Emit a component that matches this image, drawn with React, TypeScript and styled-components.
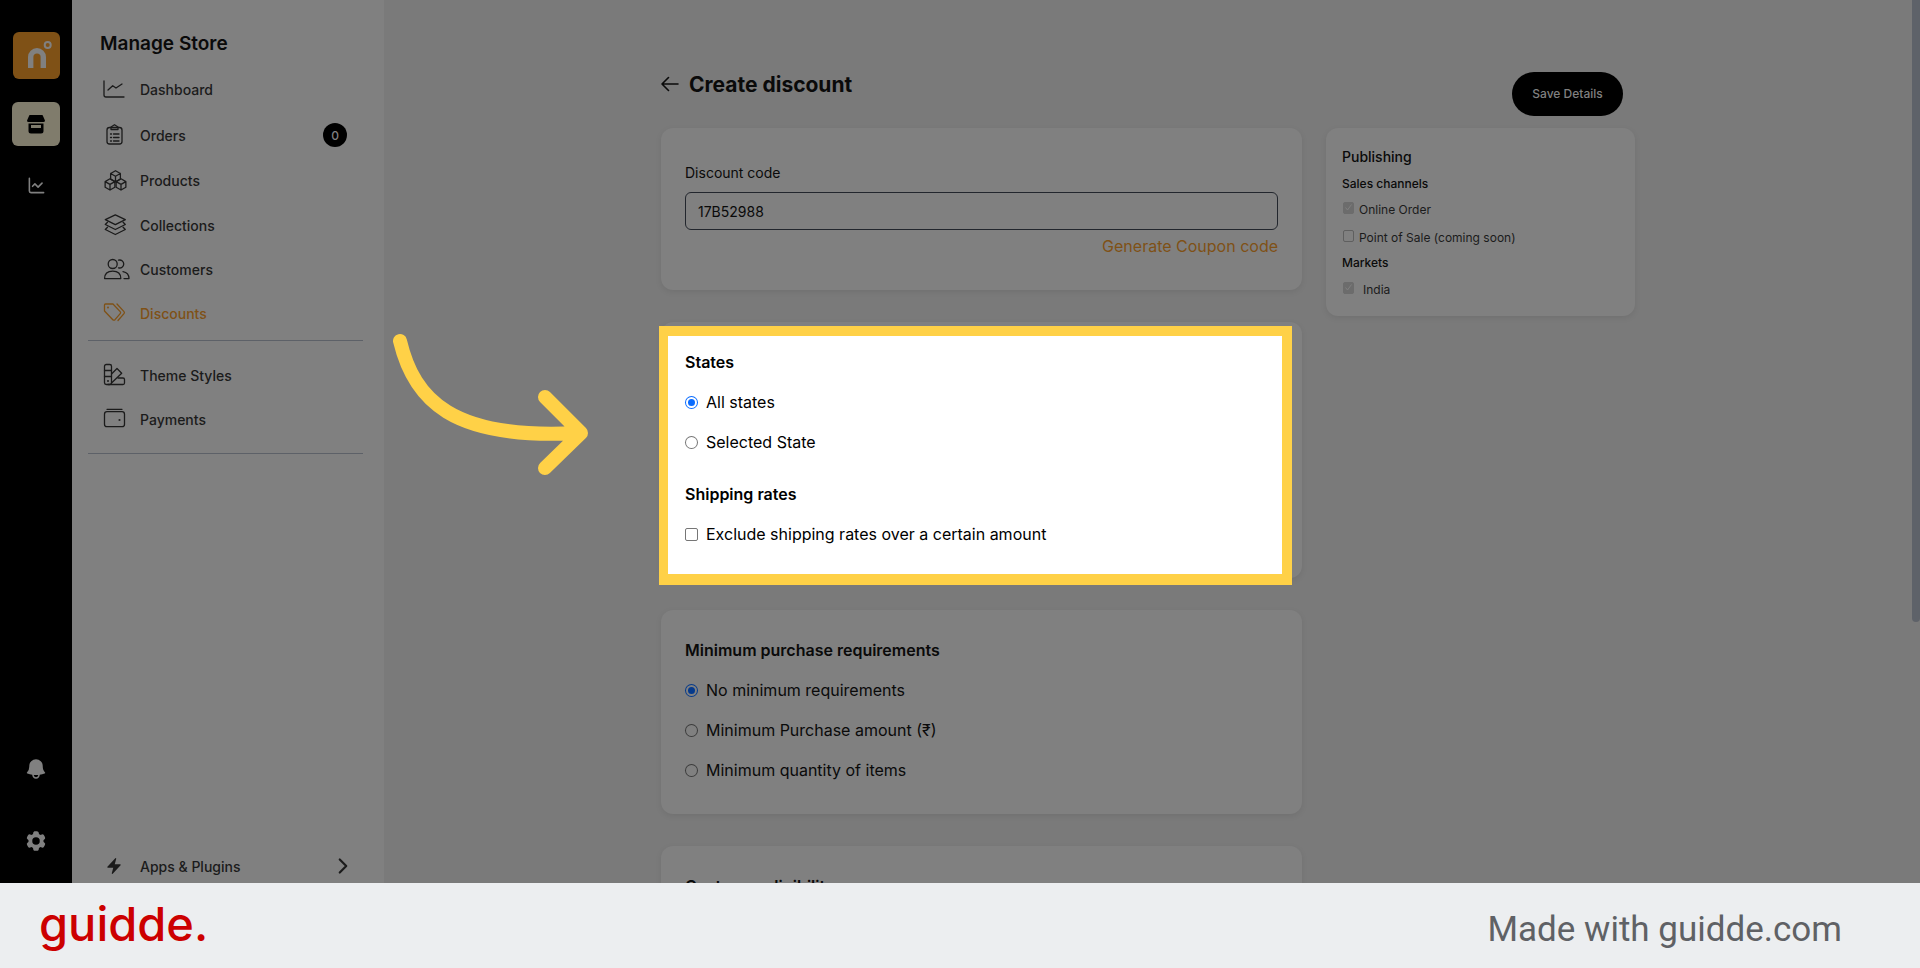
import styled, { createGlobalStyle } from 'styled-components';
import { HiBell, HiCog6Tooth, HiBolt } from 'react-icons/hi2';
import { ChevronRight, ChartLine } from 'lucide-react';

const GlobalStyle = createGlobalStyle`
    html, body {
        margin: 0;
        padding: 0;
        height: 100%;
        overflow: hidden;
        font-family: Inter, "Liberation Sans", sans-serif;
        color: #0a0a0a;
    }
    * { box-sizing: border-box; }
`;

const Screen = styled.div`
    position: relative;
    width: 1920px;
    height: 968px;
    display: flex;
    flex-direction: column;
    overflow: hidden;
`;

const Shell = styled.div`
    flex: 1;
    min-height: 0;
    display: flex;
    overflow: hidden;
    background: #7a7a7a;
`;

const Rail = styled.nav`
    width: 72px;
    background: #000;
    display: flex;
    flex-direction: column;
    align-items: center;
    padding: 32px 0 30px;
    color: #808080;
`;

const LogoTile = styled.div`
    width: 47px;
    height: 47px;
    border-radius: 6px;
    background: #7f5116;
    display: flex;
`;

const StoreTile = styled.div`
    width: 48px;
    height: 44px;
    margin-top: 23px;
    border-radius: 6px;
    background: #807c6c;
    display: flex;
    align-items: center;
    justify-content: center;
`;

const RailIcon = styled.div<{ $top?: number; $auto?: boolean }>`
    display: flex;
    margin-top: ${(p) => (p.$auto ? 'auto' : `${p.$top ?? 0}px`)};
`;

const Sidebar = styled.aside`
    width: 312px;
    background: #808080;
    padding: 32px 21px 0 16px;
    display: flex;
    flex-direction: column;
`;

const SideTitle = styled.h2`
    margin: 0 0 10px 12px;
    font-size: 19px;
    line-height: 24px;
    font-weight: 600;
`;

const SideItem = styled.div<{ $active?: boolean; $height?: number }>`
    height: ${(p) => p.$height ?? 44}px;
    padding-left: 12px;
    display: flex;
    align-items: center;
    font-size: 14px;
    font-weight: 500;
    color: ${(p) => (p.$active ? '#7f5116' : '#1b1b1b')};
`;

const SideIcon = styled.span<{ $inset?: number }>`
    width: 40px;
    padding-left: ${(p) => p.$inset ?? 0}px;
    display: flex;
    align-items: center;
`;

const SideLabel = styled.span`
    flex: 1;
`;

const CountBadge = styled.span`
    width: 24px;
    height: 24px;
    margin-right: 16px;
    border-radius: 50%;
    background: #000;
    color: #808080;
    font-size: 12px;
    display: flex;
    align-items: center;
    justify-content: center;
`;

const Divider = styled.hr<{ $top: number }>`
    width: 275px;
    margin: ${(p) => p.$top}px 0 12px 0;
    border: 0;
    border-top: 1px solid #5d6168;
`;

const SideSpacer = styled.div`
    flex: 1;
`;

const Main = styled.main`
    flex: 1;
    min-width: 0;
    padding: 72px 0 0 277px;
    display: flex;
    flex-direction: column;
    position: relative;
`;

const HeadRow = styled.div`
    width: 962px;
    height: 44px;
    margin-bottom: 12px;
    display: flex;
    justify-content: space-between;
`;

const PageTitle = styled.h1`
    margin: 0;
    height: 24px;
    display: flex;
    align-items: center;
    gap: 10px;
    font-size: 21px;
    font-weight: 700;
`;

const SaveButton = styled.button`
    width: 111px;
    height: 44px;
    padding: 0 0 2px;
    border: 0;
    border-radius: 22px;
    background: #000;
    color: #808080;
    font: 500 12px Inter, sans-serif;
`;

const Columns = styled.div`
    display: flex;
    align-items: flex-start;
    gap: 24px;
`;

const Stack = styled.div`
    width: 641px;
    display: flex;
    flex-direction: column;
    gap: 32px;
    flex-shrink: 0;
`;

const Card = styled.section<{ $height?: number }>`
    height: ${(p) => (p.$height ? `${p.$height}px` : 'auto')};
    padding: 24px;
    border-radius: 12px;
    background: #808080;
    box-shadow: 0 2px 6px rgba(0, 0, 0, 0.08);
    flex-shrink: 0;
`;

const PublishCard = styled(Card)`
    width: 309px;
    padding: 20px 16px;
`;

const FieldLabel = styled.div`
    font-size: 14px;
    line-height: 18px;
    margin: 12px 0 10px;
`;

const CodeInput = styled.div`
    height: 38px;
    padding-left: 12px;
    border: 1px solid #22262d;
    border-radius: 6px;
    display: flex;
    align-items: center;
    font-size: 14px;
`;

const GenerateLink = styled.div`
    margin-top: 5px;
    text-align: right;
    font-size: 16px;
    line-height: 22px;
    color: #7f5116;
`;

const GroupTitle = styled.h3<{ $top?: number }>`
    margin: ${(p) => p.$top ?? 0}px 0 0;
    font-size: 16px;
    line-height: 24px;
    font-weight: 600;
`;

const OptionRow = styled.label`
    margin-top: 16px;
    height: 24px;
    display: flex;
    align-items: center;
    gap: 8px;
    font-size: 16px;
`;

const Radio = styled.span<{ $on?: boolean; $lit?: boolean }>`
    width: 11px;
    height: 11px;
    margin: 1px;
    flex-shrink: 0;
    border-radius: 50%;
    background: ${(p) => (p.$on ? (p.$lit ? '#0a6cff' : '#053a8c') : 'transparent')};
    box-shadow: ${(p) =>
        p.$on
            ? `inset 0 0 0 2px ${p.$lit ? '#fff' : '#808080'}, 0 0 0 1px ${p.$lit ? '#0a6cff' : '#053a8c'}`
            : `0 0 0 1px ${p.$lit ? '#767676' : '#3b3b3b'}`};
`;

const BoxTick = styled.span`
    width: 13px;
    height: 13px;
    flex-shrink: 0;
    border: 1px solid #767676;
    border-radius: 2px;
`;

const PublishTitle = styled.div`
    font-size: 14px;
    line-height: 18px;
    font-weight: 500;
`;

const PublishHeading = styled.div`
    margin-top: 10px;
    font-size: 12px;
    line-height: 16px;
    font-weight: 500;
`;

const PublishRow = styled.div<{ $gap?: number; $top?: number }>`
    height: 16px;
    margin-top: ${(p) => p.$top ?? 10}px;
    display: flex;
    align-items: center;
    gap: ${(p) => p.$gap ?? 5}px;
    font-size: 12px;
    color: #1b1b1b;
`;

const MutedBox = styled.span<{ $checked?: boolean }>`
    width: 11px;
    height: 12px;
    margin: -3px 0 0 1px;
    border-radius: 2px;
    background: ${(p) => (p.$checked ? '#6c6c6c' : 'transparent')};
    border: 1px solid ${(p) => (p.$checked ? '#6c6c6c' : '#5f5f5f')};
    display: flex;
    align-items: center;
    justify-content: center;
`;

const ScrollThumb = styled.div`
    position: absolute;
    top: 0;
    right: 0;
    width: 8px;
    height: 622px;
    border-radius: 0 0 4px 4px;
    background: #5e6269;
`;

// highlighted step on top of the dimmed page
const Highlight = styled.div`
    position: absolute;
    left: 659px;
    top: 326px;
    width: 633px;
    height: 259px;
    padding: 10px 16px 0 17px;
    background: #fff;
    border-style: solid;
    border-color: #ffd147;
    border-width: 10px 10px 11px 9px;
    color: #000;
`;

const Pointer = styled.svg`
    position: absolute;
    left: 380px;
    top: 320px;
`;

const Footer = styled.footer`
    height: 85px;
    padding: 0 78px 0 39px;
    background: #eceef0;
    display: flex;
    align-items: center;
    justify-content: space-between;
`;

const Wordmark = styled.div`
    font-family: Inter, sans-serif;
    font-size: 47px;
    font-weight: 500;
    line-height: 1;
    margin-top: -4px;
    color: #cc0000;
`;

const MadeWith = styled.div`
    font-family: Roboto, sans-serif;
    font-size: 35px;
    margin-top: 7px;
    color: #5f6165;
`;

const Glyph = styled.svg`
    fill: none;
    stroke: currentColor;
    stroke-width: 1.3;
    stroke-linecap: round;
    stroke-linejoin: round;
`;

const DashboardIcon = () => (
    <Glyph width="30" height="24" viewBox="0 0 30 24">
        <path d="M4 4v14a2 2 0 0 0 2 2h18" />
        <path d="M8 13l4.7-4.3 3.3 2.3 6-4" />
    </Glyph>
);

const OrdersIcon = () => (
    <Glyph width="30" height="24" viewBox="0 0 30 24">
        <rect x="7" y="4.5" width="15" height="16.5" rx="2.5" />
        <path d="M11 6.5V4l3.5-2.3L18 4v2.5z" />
        <path d="M10.5 11h1M13.5 11H19M10.5 14.5h1M13.5 14.5H19M10.5 18h1M13.5 18H19" />
    </Glyph>
);

const cube = (x: number, y: number, r: number) => {
    const dx = r * 0.87;
    const dy = r / 2;
    return `M${x} ${y - r}L${x + dx} ${y - dy}V${y + dy}L${x} ${y + r}L${x - dx} ${y + dy}V${y - dy}Z M${x - dx} ${y - dy}L${x} ${y}L${x + dx} ${y - dy}M${x} ${y}V${y + r}`;
};

const ProductsIcon = () => (
    <Glyph width="30" height="24" viewBox="0 0 30 24">
        <path d={cube(15.5, 7.3, 5.6)} />
        <path d={cube(10, 15.4, 5.6)} />
        <path d={cube(21, 15.4, 5.6)} />
    </Glyph>
);

const CollectionsIcon = () => (
    <Glyph width="30" height="24" viewBox="0 0 30 24">
        <path d="M15.3 1.8l10 4.8-10 5-10-5z" />
        <path d="M7.5 9.2l-2.2 2.3 10 5 10-5-2.2-2.3" />
        <path d="M7.5 14.2l-2.2 2.3 10 5 10-5-2.2-2.3" />
    </Glyph>
);

const CustomersIcon = () => (
    <Glyph width="30" height="24" viewBox="0 0 30 24">
        <circle cx="12.7" cy="7" r="4.5" />
        <path d="M18.5 3.2a4 4 0 1 1 0 7.6" />
        <path d="M4.6 21.6c0-5 3.4-7.4 8.1-7.4s8.1 2.4 8.1 7.4z" />
        <path d="M23 14.6c3.6.6 6 3.2 6 7h-5" />
    </Glyph>
);

const DiscountsIcon = () => (
    <Glyph width="30" height="24" viewBox="0 0 30 24">
        <path d="M5.5 3H13l7.2 7.6a1.5 1.5 0 0 1 0 2L15 18.7a1.5 1.5 0 0 1-2.2 0L4.5 10V4a1 1 0 0 1 1-1z" />
        <path d="M17 3l7 7.6a1.5 1.5 0 0 1 0 2L18 19.5" />
        <circle cx="8" cy="6.5" r="0.4" />
    </Glyph>
);

const ThemeIcon = () => (
    <Glyph width="30" height="24" viewBox="0 0 30 24">
        <rect x="4.5" y="1.5" width="7" height="20" rx="1.8" />
        <path d="M4.5 7.5h7M4.5 13.5h7" />
        <circle cx="8" cy="18" r="0.4" />
        <path d="M11.5 11l5.5-5.5 4.7 4.7L11.5 20" />
        <path d="M18 15h5a1.5 1.5 0 0 1 1.5 1.5V20a1.5 1.5 0 0 1-1.5 1.5H8" />
    </Glyph>
);

const PaymentsIcon = () => (
    <Glyph width="30" height="24" viewBox="0 0 30 24">
        <rect x="4.5" y="4.7" width="20" height="15" rx="2.5" />
        <path d="M7 2.3h15" />
        <circle cx="19.5" cy="13" r="0.4" />
    </Glyph>
);

const BackArrow = () => (
    <Glyph width="18" height="16" viewBox="0 0 18 16" style={{ strokeWidth: 1.6 }}>
        <path d="M1 8h16M7.5 1.5L1 8l6.5 6.5" />
    </Glyph>
);

const TickMark = () => (
    <svg width="9" height="9" viewBox="0 0 9 9" fill="none">
        <path d="M1.5 4.5l2 2.5 4-5.5" stroke="#808080" strokeWidth="1" />
    </svg>
);

const NLogo = () => (
    <svg width="47" height="47" viewBox="0 0 47 47" fill="none">
        <path d="M17.7 36V25a6.3 6.3 0 0 1 12.6 0V36" stroke="#808080" strokeWidth="5.4" />
        <circle cx="34.7" cy="13" r="3" stroke="#808080" strokeWidth="2" />
    </svg>
);

const StoreIcon = () => (
    <svg width="20" height="20" viewBox="0 0 20 20" fill="#000">
        <path d="M3.5 1h13L19 6.5a1.6 1.6 0 0 1-1.6 1.6H2.6A1.6 1.6 0 0 1 1 6.5z" />
        <path d="M2.5 9.5h15V17a2.5 2.5 0 0 1-2.5 2.5H5A2.5 2.5 0 0 1 2.5 17zM5 11v3h10v-3z" fillRule="evenodd" />
    </svg>
);

const navTop = [
    { label: 'Dashboard', icon: DashboardIcon, height: 46 },
    { label: 'Orders', icon: OrdersIcon, height: 46 },
    { label: 'Products', icon: ProductsIcon, height: 45 },
    { label: 'Collections', icon: CollectionsIcon, height: 44 },
    { label: 'Customers', icon: CustomersIcon, height: 44 },
];

const App = () => {
    return (
        <Screen>
            <GlobalStyle />
            <Shell>
                <Rail>
                    <LogoTile>
                        <NLogo />
                    </LogoTile>
                    <StoreTile>
                        <StoreIcon />
                    </StoreTile>
                    <RailIcon $top={30}>
                        <ChartLine size={19} strokeWidth={2} />
                    </RailIcon>
                    <RailIcon $auto>
                        <HiBell size={24} />
                    </RailIcon>
                    <RailIcon $top={48}>
                        <HiCog6Tooth size={24} />
                    </RailIcon>
                </Rail>
                <Sidebar>
                    <SideTitle>Manage Store</SideTitle>
                    {navTop.map((item) => (
                        <SideItem key={item.label} $height={item.height}>
                            <SideIcon>
                                <item.icon />
                            </SideIcon>
                            <SideLabel>{item.label}</SideLabel>
                            {item.label === 'Orders' && <CountBadge>0</CountBadge>}
                        </SideItem>
                    ))}
                    <SideItem $active>
                        <SideIcon>
                            <DiscountsIcon />
                        </SideIcon>
                        <SideLabel>Discounts</SideLabel>
                    </SideItem>
                    <Divider $top={5} />
                    <SideItem>
                        <SideIcon>
                            <ThemeIcon />
                        </SideIcon>
                        <SideLabel>Theme Styles</SideLabel>
                    </SideItem>
                    <SideItem>
                        <SideIcon>
                            <PaymentsIcon />
                        </SideIcon>
                        <SideLabel>Payments</SideLabel>
                    </SideItem>
                    <Divider $top={12} />
                    <SideSpacer />
                    <SideItem $height={34}>
                        <SideIcon $inset={5}>
                            <HiBolt size={18} />
                        </SideIcon>
                        <SideLabel>Apps &amp; Plugins</SideLabel>
                        <ChevronRight size={26} strokeWidth={2} style={{ marginRight: 7 }} />
                    </SideItem>
                </Sidebar>
                <Main>
                    <HeadRow>
                        <PageTitle>
                            <BackArrow />
                            Create discount
                        </PageTitle>
                        <SaveButton>Save Details</SaveButton>
                    </HeadRow>
                    <Columns>
                        <Stack>
                            <Card $height={162}>
                                <FieldLabel>Discount code</FieldLabel>
                                <CodeInput>17B52988</CodeInput>
                                <GenerateLink>Generate Coupon code</GenerateLink>
                            </Card>
                            <Card $height={256} />
                            <Card $height={204}>
                                <GroupTitle $top={4}>Minimum purchase requirements</GroupTitle>
                                <OptionRow>
                                    <Radio $on />
                                    No minimum requirements
                                </OptionRow>
                                <OptionRow>
                                    <Radio />
                                    Minimum Purchase amount (₹)
                                </OptionRow>
                                <OptionRow>
                                    <Radio />
                                    Minimum quantity of items
                                </OptionRow>
                            </Card>
                            <Card $height={160}>
                                <GroupTitle $top={4}>Customer eligibility</GroupTitle>
                            </Card>
                        </Stack>
                        <PublishCard $height={188}>
                            <PublishTitle>Publishing</PublishTitle>
                            <PublishHeading>Sales channels</PublishHeading>
                            <PublishRow $top={9}>
                                <MutedBox $checked>
                                    <TickMark />
                                </MutedBox>
                                Online Order
                            </PublishRow>
                            <PublishRow $top={12}>
                                <MutedBox />
                                Point of Sale (coming soon)
                            </PublishRow>
                            <PublishHeading>Markets</PublishHeading>
                            <PublishRow $gap={9}>
                                <MutedBox $checked>
                                    <TickMark />
                                </MutedBox>
                                India
                            </PublishRow>
                        </PublishCard>
                    </Columns>
                    <ScrollThumb />
                </Main>
            </Shell>
            <Footer>
                <Wordmark>guidde.</Wordmark>
                <MadeWith>Made with guidde.com</MadeWith>
            </Footer>
            <Pointer width="220" height="160" viewBox="0 0 220 160" fill="none">
                <path
                    d="M20 21C34 80 72 120 198 113M165 77L201 113L165 148"
                    stroke="#ffd147"
                    strokeWidth="14"
                    strokeLinecap="round"
                    strokeLinejoin="round"
                />
            </Pointer>
            <Highlight>
                <GroupTitle $top={4}>States</GroupTitle>
                <OptionRow>
                    <Radio $on $lit />
                    All states
                </OptionRow>
                <OptionRow>
                    <Radio $lit />
                    Selected State
                </OptionRow>
                <GroupTitle $top={28}>Shipping rates</GroupTitle>
                <OptionRow>
                    <BoxTick />
                    Exclude shipping rates over a certain amount
                </OptionRow>
            </Highlight>
        </Screen>
    );
};

export default App;
